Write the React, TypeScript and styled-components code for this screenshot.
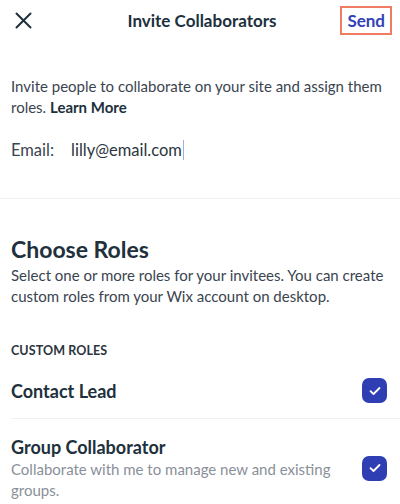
import React from "react";
import styled, { createGlobalStyle } from "styled-components";

const GlobalStyle = createGlobalStyle`
  *, *::before, *::after {
    box-sizing: border-box;
  }
  body {
    margin: 0;
    background: #ffffff;
    font-family: "Lato", "Noto Sans", sans-serif;
    color: #2b3540;
  }
`;

const Screen = styled.div`
  width: 400px;
  height: 504px;
  overflow: hidden;
  background: #ffffff;
`;

const TopBar = styled.header`
  display: grid;
  grid-template-columns: 60px 1fr 60px;
  align-items: center;
  height: 40px;
  padding: 0 8px 0 12px;
`;

const CloseButton = styled.button`
  border: none;
  background: none;
  padding: 0;
  width: 22px;
  height: 22px;
  display: flex;
  align-items: center;
  justify-content: center;
  color: #20303c;
`;

const Title = styled.h1`
  margin: 0;
  text-align: center;
  font-size: 17px;
  font-weight: 700;
  color: #20303c;
`;

const SendButton = styled.button`
  justify-self: end;
  border: 2px solid #ef7b62;
  background: none;
  padding: 2px 5px;
  font-family: inherit;
  font-size: 17px;
  font-weight: 700;
  color: #3342b8;
`;

const Intro = styled.section`
  height: 159px;
  padding: 36px 11px 0;
  border-bottom: 1.5px solid #f0f1f5;
`;

const Text = styled.p<{ $muted?: boolean }>`
  margin: 0;
  font-size: 15px;
  line-height: 21px;
  color: ${(p) => (p.$muted ? "#8a9099" : "#3a444f")};
`;

const Bold = styled.strong`
  font-weight: 700;
  color: #20303c;
`;

const EmailRow = styled.div`
  display: flex;
  align-items: center;
  gap: 17px;
  margin-top: 21px;
  font-size: 16.5px;
  line-height: 22px;
  color: #3a444f;
`;

const EmailValue = styled.span`
  display: flex;
  align-items: center;
  color: #2b3540;
  &::after {
    content: "";
    width: 1px;
    height: 20px;
    margin-left: 1px;
    background: #9fb0e0;
  }
`;

const Roles = styled.section`
  padding: 36px 11px 0;
`;

const RolesTitle = styled.h2`
  margin: 0 0 2px;
  font-size: 23px;
  line-height: 28px;
  font-weight: 700;
  color: #20303c;
`;

const GroupLabel = styled.div`
  margin-top: 36px;
  font-size: 12.5px;
  line-height: 16px;
  font-weight: 700;
  letter-spacing: 0.1px;
  color: #2b3540;
`;

const RoleList = styled.ul`
  list-style: none;
  margin: 3px -11px 0 0;
  padding: 0;
`;

const RoleItem = styled.li`
  display: flex;
  align-items: center;
  justify-content: space-between;
  gap: 16px;
  padding: 16px 13px 15px 0;
  & + & {
    border-top: 1.5px solid #eef0f4;
  }
`;

const RoleName = styled.div`
  font-size: 18px;
  font-weight: 700;
  line-height: 24px;
  color: #20303c;
`;

const Checkbox = styled.span`
  flex: none;
  width: 25px;
  height: 25px;
  border-radius: 7px;
  background: #2f3eb3;
  display: flex;
  align-items: center;
  justify-content: center;
`;

const roles = [
  { name: "Contact Lead" },
  {
    name: "Group Collaborator",
    desc: "Collaborate with me to manage new and existing groups.",
  },
];

const Check = () => (
  <Checkbox>
    <svg width="12" height="10" viewBox="0 0 12 10" fill="none">
      <path
        d="M1.5 5.2 L4.5 8 L10.5 2"
        stroke="#fff"
        strokeWidth="1.8"
        strokeLinecap="round"
        strokeLinejoin="round"
      />
    </svg>
  </Checkbox>
);

export default function App() {
  return (
    <Screen>
      <GlobalStyle />
      <TopBar>
        <CloseButton aria-label="Close">
          <svg width="17" height="17" viewBox="0 0 17 17">
            <path
              d="M1.5 1.5 L15.5 15.5 M15.5 1.5 L1.5 15.5"
              stroke="#20303c"
              strokeWidth="2"
              strokeLinecap="round"
            />
          </svg>
        </CloseButton>
        <Title>Invite Collaborators</Title>
        <SendButton>Send</SendButton>
      </TopBar>
      <Intro>
        <Text>
          Invite people to collaborate on your site and assign them roles.{" "}
          <Bold>Learn More</Bold>
        </Text>
        <EmailRow>
          <span>Email:</span>
          <EmailValue>lilly@email.com</EmailValue>
        </EmailRow>
      </Intro>
      <Roles>
        <RolesTitle>Choose Roles</RolesTitle>
        <Text>
          Select one or more roles for your invitees. You can create custom
          roles from your Wix account on desktop.
        </Text>
        <GroupLabel>CUSTOM ROLES</GroupLabel>
        <RoleList>
          {roles.map((r) => (
            <RoleItem key={r.name}>
              <div>
                <RoleName>{r.name}</RoleName>
                {r.desc && <Text $muted>{r.desc}</Text>}
              </div>
              <Check />
            </RoleItem>
          ))}
        </RoleList>
      </Roles>
    </Screen>
  );
}
